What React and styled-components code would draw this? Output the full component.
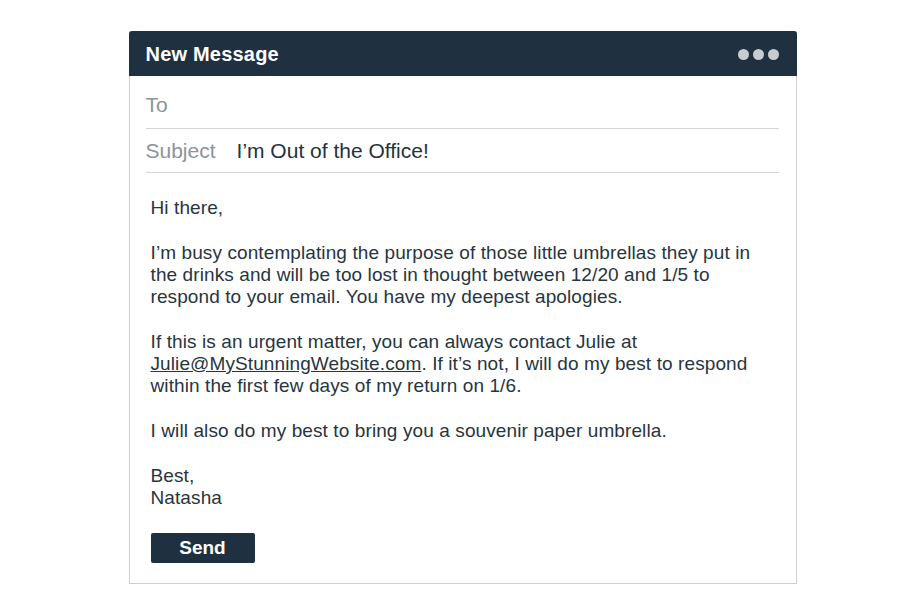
import React from 'react';
import styled, { createGlobalStyle } from 'styled-components';

const GlobalStyle = createGlobalStyle`
  html, body {
    margin: 0;
    padding: 0;
    background: #ffffff;
  }
  body {
    font-family: "Liberation Sans", Arial, sans-serif;
  }
`;

const Page = styled.div`
  width: 924px;
  height: 614px;
  padding-top: 31px;
  box-sizing: border-box;
  display: flex;
  justify-content: center;
  padding-left: 1px;
`;

const Window = styled.div`
  width: 668px;
  height: 553px;
  box-sizing: border-box;
  border: 1px solid #cfcfcf;
  border-top: none;
  border-radius: 3px 3px 0 0;
  display: flex;
  flex-direction: column;
  background: #fff;
`;

const TitleBar = styled.div`
  height: 45px;
  box-sizing: border-box;
  margin: 0 -1px;
  background: #1f3040;
  border-radius: 3px 3px 0 0;
  display: flex;
  align-items: center;
  justify-content: space-between;
  padding: 2px 18px 0 17px;
`;

const Title = styled.div`
  color: #ffffff;
  font-weight: bold;
  font-size: 20px;
  letter-spacing: 0.2px;
`;

const Dots = styled.div`
  display: flex;
  gap: 4px;
  margin-top: -1px;
`;

const Dot = styled.span`
  width: 11px;
  height: 11px;
  border-radius: 50%;
  background: #c8cbcf;
`;

const Fields = styled.div`
  padding: 0 17px 0 16px;
`;

const FieldRow = styled.div`
  height: ${p => (p.first ? '53px' : '44px')};
  border-bottom: 1px solid #d4d4d4;
  display: flex;
  align-items: center;
  gap: 21px;
  padding-top: ${p => (p.first ? '6px' : '0')};
  box-sizing: border-box;
`;

const Label = styled.span`
  color: #8b949b;
  font-size: 21px;
`;

const Value = styled.span`
  color: #24323f;
  font-size: 21px;
`;

const Body = styled.div`
  padding: 24px 20px 0 21px;
  color: #27353f;
  font-size: 19px;
  letter-spacing: 0.1px;
  line-height: 22.3px;
`;

const Para = styled.p`
  margin: 0 0 22.3px 0;
`;

const Link = styled.a`
  color: inherit;
  text-decoration: underline;
`;

const SendButton = styled.button`
  margin: 2px 0 0 21px;
  width: 104px;
  height: 30px;
  background: #1f3040;
  color: #fff;
  border: none;
  border-radius: 2px;
  font-family: "Liberation Sans", Arial, sans-serif;
  font-weight: bold;
  font-size: 19px;
  padding: 0;
  align-self: flex-start;
`;

export default function App() {
  return (
    <Page>
      <GlobalStyle />
      <Window>
        <TitleBar>
          <Title>New Message</Title>
          <Dots>
            <Dot />
            <Dot />
            <Dot />
          </Dots>
        </TitleBar>
        <Fields>
          <FieldRow first>
            <Label>To</Label>
          </FieldRow>
          <FieldRow>
            <Label>Subject</Label>
            <Value>I’m Out of the Office!</Value>
          </FieldRow>
        </Fields>
        <Body>
          <Para>Hi there,</Para>
          <Para>
            I’m busy contemplating the purpose of those little umbrellas they put in
            <br />
            the drinks and will be too lost in thought between 12/20 and 1/5 to
            <br />
            respond to your email. You have my deepest apologies.
          </Para>
          <Para>
            If this is an urgent matter, you can always contact Julie at
            <br />
            <Link href="#">Julie@MyStunningWebsite.com</Link>. If it’s not, I will do my best to respond
            <br />
            within the first few days of my return on 1/6.
          </Para>
          <Para>I will also do my best to bring you a souvenir paper umbrella.</Para>
          <Para>
            Best,
            <br />
            Natasha
          </Para>
        </Body>
        <SendButton>Send</SendButton>
      </Window>
    </Page>
  );
}
